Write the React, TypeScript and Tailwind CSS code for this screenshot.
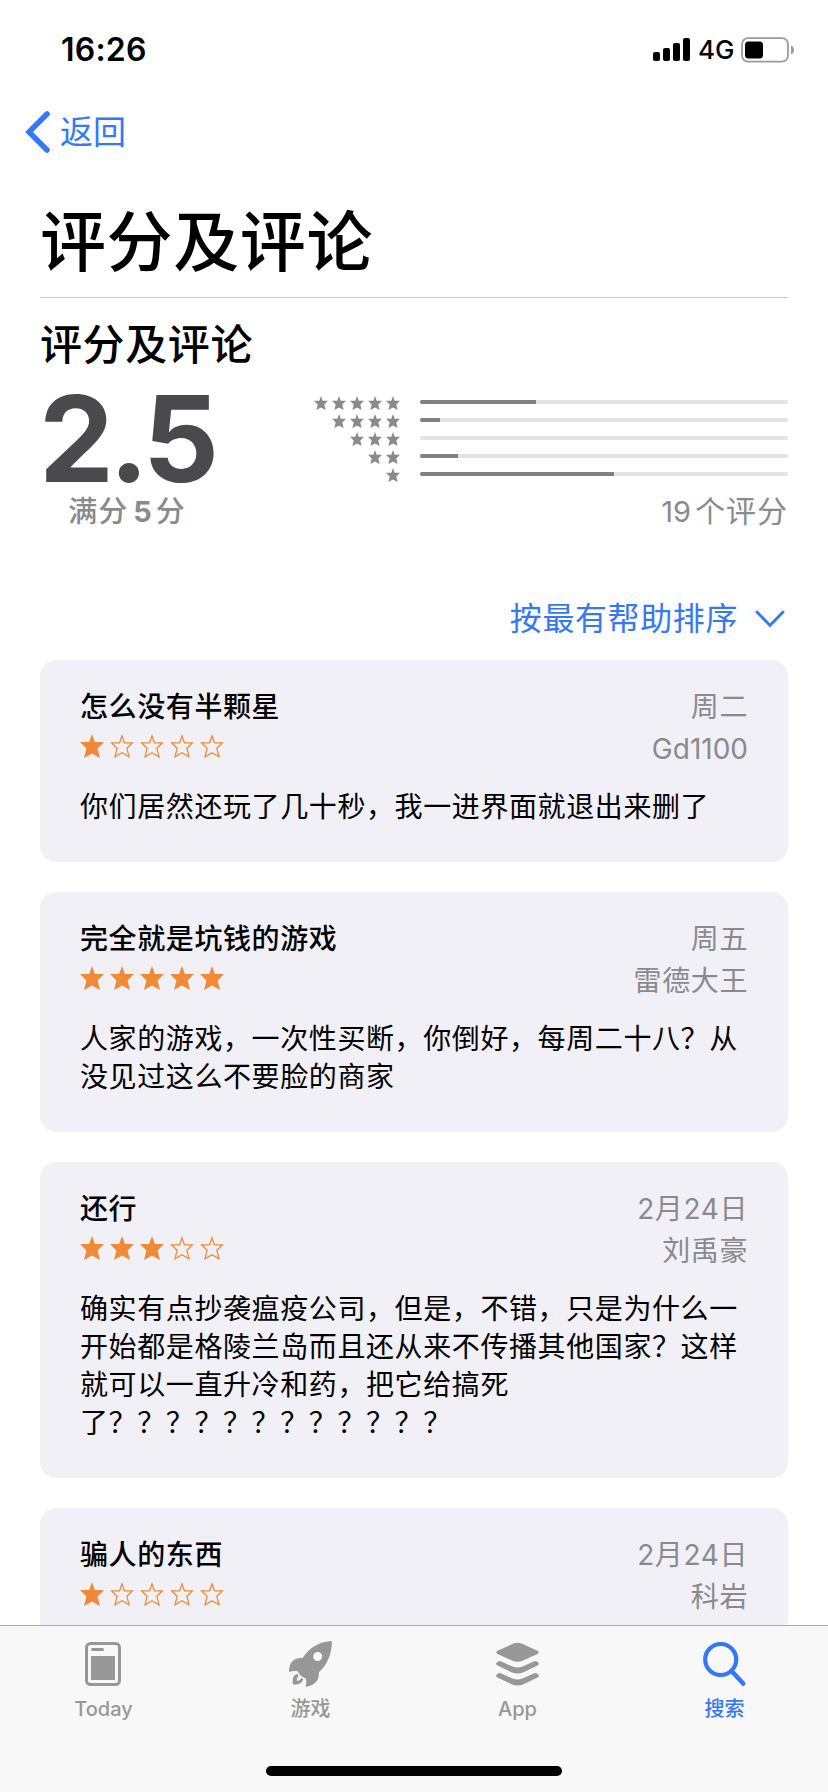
import clsx from "clsx";

const BREAKDOWN = [
  { stars: 5, percent: 31.5 },
  { stars: 4, percent: 5.5 },
  { stars: 3, percent: 0 },
  { stars: 2, percent: 10.4 },
  { stars: 1, percent: 52.7 },
];

const REVIEWS = [
  {
    title: "怎么没有半颗星",
    rating: 1,
    date: "周二",
    author: "Gd1100",
    body: "你们居然还玩了几十秒，我一进界面就退出来删了",
  },
  {
    title: "完全就是坑钱的游戏",
    rating: 5,
    date: "周五",
    author: "雷德大王",
    body: "人家的游戏，一次性买断，你倒好，每周二十八？从\n没见过这么不要脸的商家",
  },
  {
    title: "还行",
    rating: 3,
    date: "2月24日",
    author: "刘禹豪",
    body: "确实有点抄袭瘟疫公司，但是，不错，只是为什么一\n开始都是格陵兰岛而且还从来不传播其他国家？这样\n就可以一直升冷和药，把它给搞死\n了？？？？？？？？？？？？",
  },
  {
    title: "骗人的东西",
    rating: 1,
    date: "2月24日",
    author: "科岩",
    body: "",
  },
];

const STAR = "M12 0 L14.9 8.1 H24 L17.6 14.6 L20 24 L12 19.5 L4 24 L6.4 14.6 L0 8.1 H9.1 Z";
const STAR_OUTLINE = "M12 1.9 L14.4 8.8 H22.4 L16.9 14.3 L19 22.8 L12 18.8 L5 22.8 L7.1 14.3 L1.6 8.8 H9.6 Z";

function Star({ filled = true, className }: { filled?: boolean; className: string }) {
  return (
    <svg viewBox="0 0 24 24" className={className}>
      {filled ? (
        <path d={STAR} fill="currentColor" />
      ) : (
        <path d={STAR_OUTLINE} fill="none" stroke="currentColor" strokeWidth="1.3" />
      )}
    </svg>
  );
}

function StatusBar() {
  return (
    <div className="flex h-[88px] items-start justify-between pl-[61px] pr-[34px] pt-[30px]">
      <div className="text-[32px] font-semibold leading-10 tracking-[0.2px]">16:26</div>
      <div className="flex h-10 items-center">
        <svg width="37" height="23" viewBox="0 0 37 23" className="mb-px">
          <rect x="0" y="14" width="7" height="9" rx="2" />
          <rect x="10" y="10" width="7" height="13" rx="2" />
          <rect x="20" y="5" width="7" height="18" rx="2" />
          <rect x="30" y="0" width="7" height="23" rx="2" />
        </svg>
        <span className="ml-2 w-[42px] text-[26px] font-[450] leading-10">4G</span>
        <svg width="54" height="26" viewBox="0 0 54 26">
          <rect x="2" y="1.2" width="46" height="23.4" rx="6" fill="none" stroke="#9b9b9b" strokeWidth="1.8" />
          <rect x="5" y="4.5" width="18" height="17" rx="3.5" />
          <path d="M51 8.5 Q54 10 54 13 Q54 16 51 17.5 Z" fill="#9b9b9b" />
        </svg>
      </div>
    </div>
  );
}

function RatingSummary() {
  return (
    <div className="flex h-[150px] justify-between">
      <div className="w-[174px]">
        <div className="-ml-px h-[96px] text-[119px] font-bold leading-[97px] tracking-[-5px] text-[#4a4a4e]">2.5</div>
        <div className="mt-[5px] flex justify-center text-[29px] font-medium leading-10 tracking-[1px] text-[#8a8a8d]">
          满分<span className="ml-[5px] mr-[3px] font-bold">5</span>分
        </div>
      </div>
      <div className="w-[474px]">
        <div className="flex flex-col pt-[3px]">
          {BREAKDOWN.map((row) => (
            <div key={row.stars} className="flex h-[18px] items-center">
              <div className="flex w-[86px] justify-end gap-1">
                {Array.from({ length: row.stars }, (_, i) => (
                  <Star key={i} className="size-3.5 text-[#8a8a8d]" />
                ))}
              </div>
              <div className="mb-0.5 ml-5 h-1 flex-1 overflow-hidden rounded-full bg-[#e4e4e4]">
                <div className="h-full bg-[#7f7f84]" style={{ width: `${row.percent}%` }} />
              </div>
            </div>
          ))}
        </div>
        <div className="mt-[7px] text-right text-[30px] leading-10 tracking-[1px] text-[#8a8a8d]">
          <span className="mr-1 text-[29px] tracking-normal">19</span>个评分
        </div>
      </div>
    </div>
  );
}

function ReviewCard({ review }: { review: (typeof REVIEWS)[number] }) {
  const latinAuthor = /^\w+$/.test(review.author);

  return (
    <article className="min-h-[202px] rounded-[16px] bg-[#f1f0f6] px-10 pb-9 pt-[26px]">
      <div className="flex justify-between tracking-[0.6px]">
        <div className="pt-px">
          <h3 className="text-[28px] font-medium leading-[40px]">{review.title}</h3>
          <div className="mt-[7px] flex gap-1.5 text-[#f08a36]">
            {[1, 2, 3, 4, 5].map((n) => (
              <Star key={n} filled={n <= review.rating} className="size-6" />
            ))}
          </div>
        </div>
        <div className="text-right text-[28px] leading-[42px] text-[#8a8a8e]">
          <div>{review.date}</div>
          <div className={clsx(latinAuthor && "tracking-normal")}>{review.author}</div>
        </div>
      </div>
      <p className="mt-[18px] whitespace-pre text-[28px] leading-[38px] tracking-[0.6px]">{review.body}</p>
    </article>
  );
}

function TodayIcon() {
  return (
    <svg width="45" height="46" viewBox="0 0 45 46">
      <rect x="5.5" y="2.5" width="33" height="41" rx="4" fill="none" stroke="currentColor" strokeWidth="3" />
      <rect x="10" y="7" width="13" height="3" rx="1.5" fill="currentColor" />
      <rect x="10" y="15" width="24" height="24" fill="currentColor" />
    </svg>
  );
}

function RocketIcon() {
  return (
    <svg width="45" height="46" viewBox="0 0 45 46" fill="currentColor">
      <path
        fillRule="evenodd"
        d="M43.8 0 C31 0.5 21 7 14.5 17 C5 16.5 1 22 1 31 C4 29.7 7 29.7 9.7 30.3 C11.2 33.8 14 36.3 17.8 37.5 C18.7 40 18.5 43 17.3 45.8 C26.5 44.5 31.5 40 30.8 31.5 C39.5 23.5 44.2 12 43.8 0 Z M29.7 11 A4.5 4.5 0 1 1 29.7 20 A4.5 4.5 0 1 1 29.7 11 Z"
      />
      <path d="M9.5 33 C4.8 33.5 4.3 38.5 5 43.5 C10 44 14.5 42.5 15.2 37.8 L12.8 37.2 C12.3 39.2 10.8 40 8.8 39.8 C8.5 37.8 9 36.2 10.7 35.2 Z" />
    </svg>
  );
}

function AppsIcon() {
  return (
    <svg width="45" height="46" viewBox="-0.5 0 45 46" fill="currentColor">
      <path d="M18 2.6 Q22 1 26 2.6 L42 9.8 Q44.5 11.3 42 12.9 L27 19.8 Q22 21.8 17 19.8 L2 12.9 Q-0.5 11.3 2 9.8 Z" />
      <path d="M5.2 20.2 L17 25.5 Q22 27.3 27 25.5 L38.8 20.2 Q40 19.7 41 20.3 L42.5 21.2 Q44.5 23 42 24.6 L28 31.2 Q22 34 16 31.2 L2 24.6 Q-0.5 23 1.5 21.2 L3 20.3 Q4 19.7 5.2 20.2 Z" />
      <path d="M5.2 32.2 L17 37.5 Q22 39.3 27 37.5 L38.8 32.2 Q40 31.7 41 32.3 L42.5 33.2 Q44.5 35 42 36.6 L28 43.2 Q22 46 16 43.2 L2 36.6 Q-0.5 35 1.5 33.2 L3 32.3 Q4 31.7 5.2 32.2 Z" />
    </svg>
  );
}

function SearchIcon() {
  return (
    <svg width="45" height="46" viewBox="0 0 45 46" fill="none" stroke="currentColor" strokeLinecap="round">
      <circle cx="18.7" cy="18.5" r="15.5" strokeWidth="4.2" />
      <path d="M30 30.5 L41.2 42.5" strokeWidth="4.6" />
    </svg>
  );
}

const TABS = [
  { label: "Today", icon: TodayIcon },
  { label: "游戏", icon: RocketIcon },
  { label: "App", icon: AppsIcon },
  { label: "搜索", icon: SearchIcon, active: true },
];

function TabBar() {
  return (
    <nav className="flex h-[167px] shrink-0 flex-col items-center border-t border-[#acacb0] bg-[#f8f8f8]">
      <div className="grid h-[140px] w-full grid-cols-4">
        {TABS.map(({ label, icon: Icon, active }) => (
          <div
            key={label}
            className={clsx("flex flex-col items-center pt-[15px]", active ? "text-[#3478f6]" : "text-[#979797]")}
          >
            <Icon />
            <span className="mt-2 text-[20px] font-medium leading-7">{label}</span>
          </div>
        ))}
      </div>
      <div className="h-2.5 w-[296px] rounded-full bg-black" />
    </nav>
  );
}

export default function App() {
  return (
    <div className="flex h-[1792px] w-[828px] flex-col overflow-hidden bg-white font-[Inter,'Noto_Sans_CJK_SC',sans-serif] text-black">
      <StatusBar />
      <div className="flex h-[88px] items-center pl-[25px] text-[#3478f6]">
        <svg width="26" height="44" viewBox="0 0 26 44" fill="none" stroke="currentColor" strokeWidth="5.5" strokeLinecap="round">
          <path d="M22 4 L4 22 L22 40" />
        </svg>
        <span className="ml-[9px] text-[33px] leading-[44px]">返回</span>
      </div>
      <main className="min-h-0 flex-1 overflow-hidden px-10">
        <h1 className="h-[122px] border-b border-[#c6c6c8] pt-[22px] text-[66px] font-medium leading-[88px] tracking-[0.6px]">评分及评论</h1>
        <h2 className="mb-4 mt-[17px] text-[42px] font-medium leading-[60px] tracking-[0.6px]">评分及评论</h2>
        <RatingSummary />
        <div className="mb-[19px] mt-[56px] flex h-11 items-center justify-end text-[32px] tracking-[0.6px] text-[#3478f6]">
          按最有帮助排序
          <svg width="30" height="18" viewBox="0 0 30 18" className="ml-[17px] mr-[3px]" fill="none" stroke="currentColor" strokeWidth="2.9" strokeLinecap="round">
            <path d="M2 2 L15 15.5 L28 2" />
          </svg>
        </div>
        <div className="flex flex-col gap-[30px]">
          {REVIEWS.map((review) => (
            <ReviewCard key={review.title} review={review} />
          ))}
        </div>
      </main>
      <TabBar />
    </div>
  );
}
